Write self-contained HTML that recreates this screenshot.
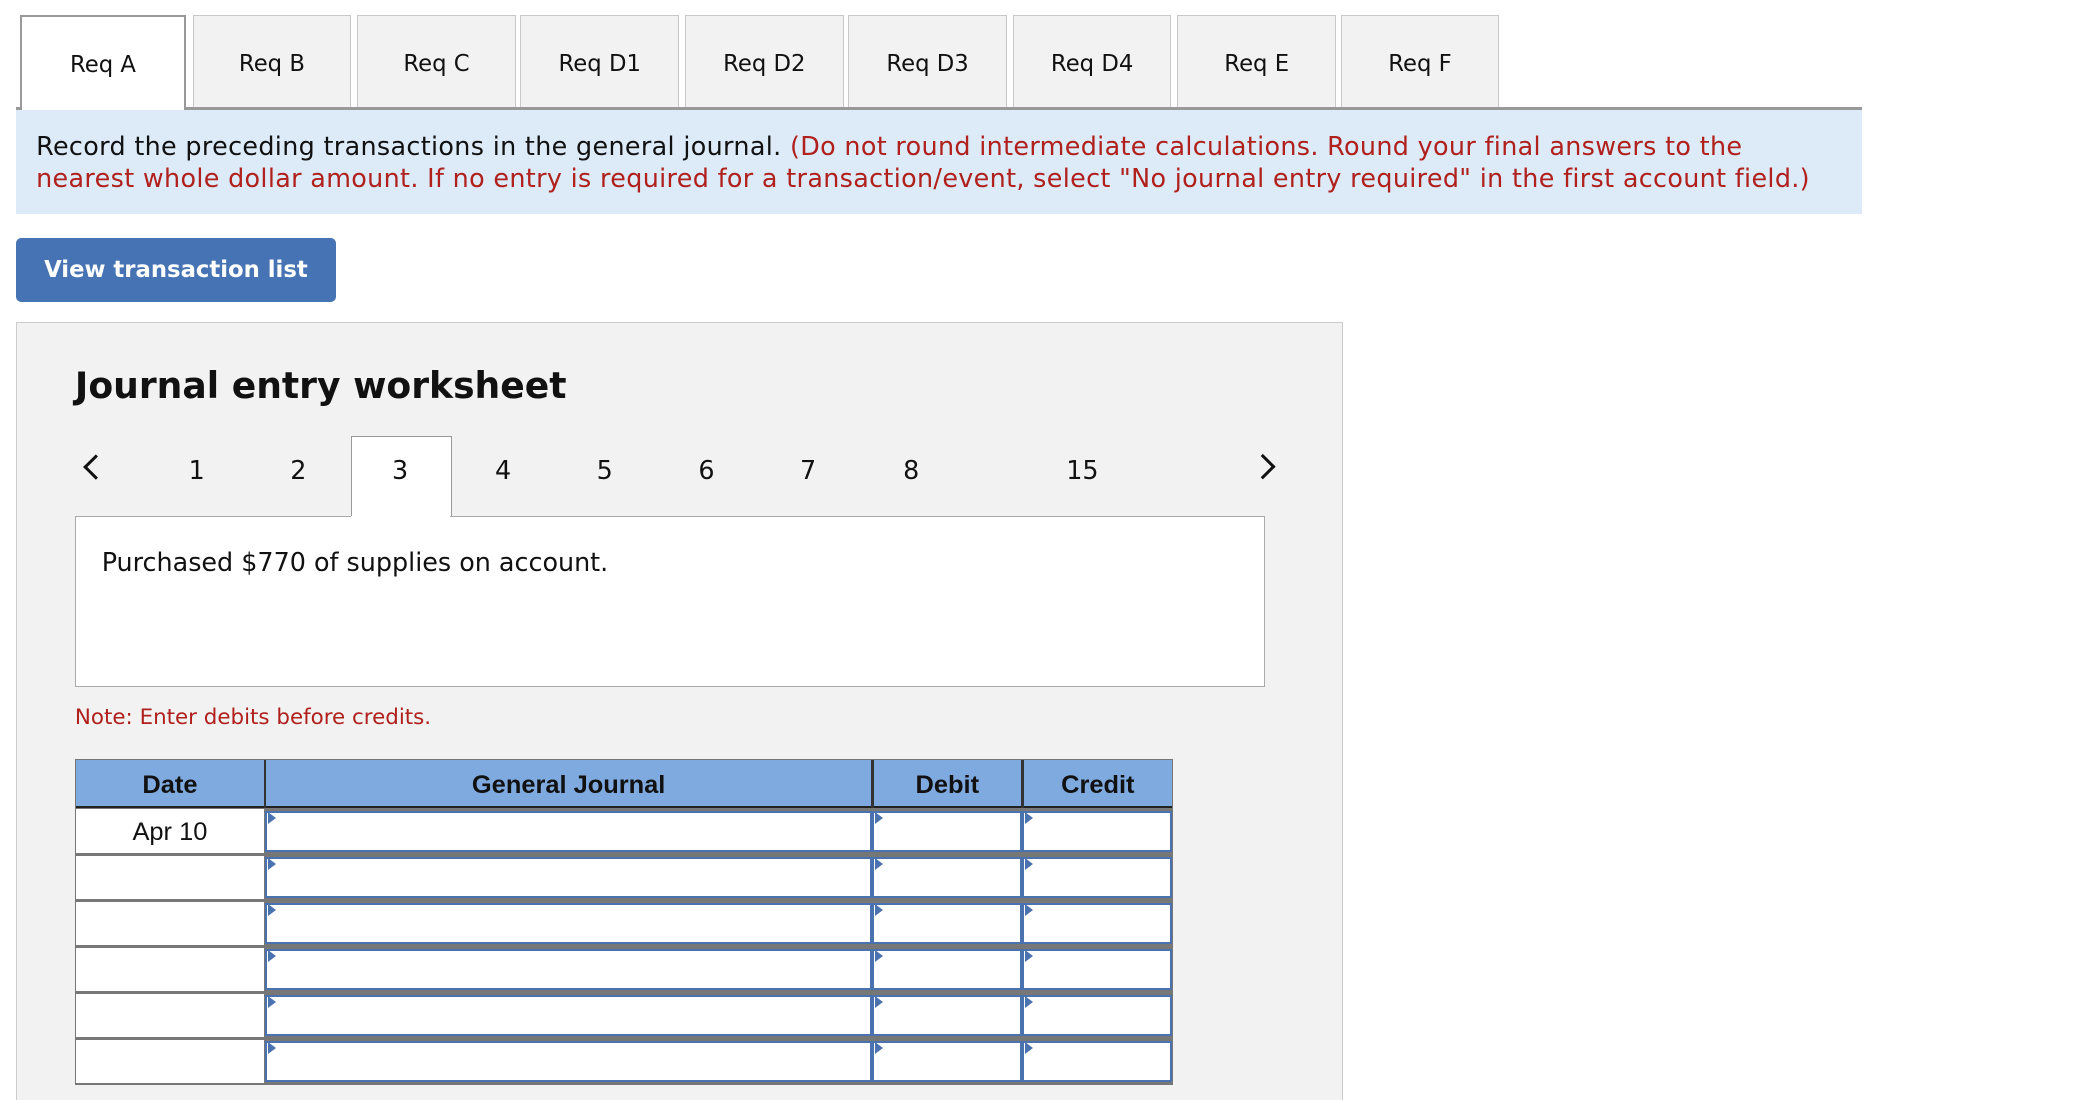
<!DOCTYPE html>
<html><head><meta charset="utf-8"><style>
html,body{margin:0;padding:0;background:#fff;overflow:hidden}
body{width:2098px;height:1100px}
#w{zoom:1.338;position:relative;width:1568px;height:822px;font-family:"DejaVu Sans","Liberation Sans",sans-serif;color:#111}
.a{position:absolute}
.tab{position:absolute;top:11px;height:69px;width:117px;background:#f2f2f2;border:1px solid #c8c8c8;border-bottom:none;font-size:17px;text-align:center;line-height:72px}
.tab.on{background:#fff;border:2px solid #999;border-bottom:none;z-index:2;height:70px}
.n{position:absolute;top:340px;font-size:19px;width:30px;text-align:center}
.cell{position:absolute;background:#fff;border:2px solid #4a72ae;box-sizing:border-box}
.tri{position:absolute;width:0;height:0;border-top:5px solid transparent;border-bottom:5px solid transparent;border-left:6px solid #4a72ae}
.arr{position:absolute;top:342px;width:11px;height:11px;border-left:2.5px solid #111;border-bottom:2.5px solid #111}
</style></head><body><div id="w">
<div class="tab on" style="left:15px;width:121px">Req A</div>
<div class="tab" style="left:144px">Req B</div>
<div class="tab" style="left:267px">Req C</div>
<div class="tab" style="left:389px">Req D1</div>
<div class="tab" style="left:512px">Req D2</div>
<div class="tab" style="left:634px">Req D3</div>
<div class="tab" style="left:757px">Req D4</div>
<div class="tab" style="left:880px">Req E</div>
<div class="tab" style="left:1002px">Req F</div>
<div class="a" style="left:12px;top:80px;width:1380px;height:2px;background:#999"></div>
<div class="a" style="left:12px;top:82px;width:1380px;height:78px;background:#ddebf8"></div>
<div class="a" style="left:27px;top:97px;width:1340px;font-size:19px;line-height:24px;letter-spacing:0.25px">Record the preceding transactions in the general journal. <span style="color:#b0201c">(Do not round intermediate calculations. Round your final answers to the nearest whole dollar amount. If no entry is required for a transaction/event, select "No journal entry required" in the first account field.)</span></div>
<div class="a" style="left:12px;top:178px;width:239px;height:48px;background:#4673b4;border-radius:4px;color:#fff;font-weight:bold;font-size:17px;line-height:48px;text-align:center">View transaction list</div>
<div class="a" style="left:12px;top:241px;width:990px;height:600px;background:#f2f2f2;border:1px solid #ccc"></div>
<div class="a" style="left:56px;top:272px;font-size:27px;font-weight:bold">Journal entry worksheet</div>
<div class="arr" style="left:65px;transform:rotate(45deg)"></div>
<div class="arr" style="left:937px;transform:rotate(-135deg)"></div>
<div class="a" style="left:262px;top:326px;width:74px;height:62px;background:#fff;border:1px solid #999;border-bottom:none"></div>
<div class="n" style="left:132px">1</div><div class="n" style="left:208px">2</div><div class="n" style="left:284px">3</div><div class="n" style="left:361px">4</div><div class="n" style="left:437px">5</div><div class="n" style="left:513px">6</div><div class="n" style="left:589px">7</div><div class="n" style="left:666px">8</div><div class="n" style="left:794px">15</div>
<div class="a" style="left:56px;top:386px;width:888px;height:126px;background:#fff;border:1px solid #aaa"></div>
<div class="a" style="left:262px;top:386px;width:74px;height:2px;background:#fff"></div>
<div class="a" style="left:76px;top:409px;font-size:19px">Purchased $770 of supplies on account.</div>
<div class="a" style="left:56px;top:527px;font-size:16px;color:#b0201c">Note: Enter debits before credits.</div>
<div class="a" style="left:56px;top:567px;width:821px;height:244px;background:#777"></div>
<div class="a" style="left:57px;top:568px;width:819px;height:36px;background:#7eaadf;border-bottom:2px solid #222;box-sizing:border-box"></div>
<div class="a" style="left:197px;top:568px;width:2px;height:36px;background:#333"></div>
<div class="a" style="left:651px;top:568px;width:2px;height:36px;background:#333"></div>
<div class="a" style="left:763px;top:568px;width:2px;height:36px;background:#333"></div>
<div class="a" style="font-family:'Liberation Sans',sans-serif;font-weight:bold;font-size:19px;top:576px;left:56px;width:142px;text-align:center">Date</div>
<div class="a" style="font-family:'Liberation Sans',sans-serif;font-weight:bold;font-size:19px;top:576px;left:198px;width:454px;text-align:center">General Journal</div>
<div class="a" style="font-family:'Liberation Sans',sans-serif;font-weight:bold;font-size:19px;top:576px;left:652px;width:112px;text-align:center">Debit</div>
<div class="a" style="font-family:'Liberation Sans',sans-serif;font-weight:bold;font-size:19px;top:576px;left:764px;width:113px;text-align:center">Credit</div>
<div id="rows"></div>
<script>
var h='';for(var i=0;i<6;i++){var t=605+i*34.4;
h+='<div class="a" style="left:57px;top:'+t+'px;width:140px;height:32.4px;background:#fff"></div>';
h+='<div class="cell" style="left:198px;top:'+(t+1)+'px;width:454px;height:31px"></div>';
h+='<div class="cell" style="left:652px;top:'+(t+1)+'px;width:112px;height:31px"></div>';
h+='<div class="cell" style="left:764px;top:'+(t+1)+'px;width:112px;height:31px"></div>';
h+='<div class="tri" style="left:200px;top:'+(t+2)+'px"></div><div class="tri" style="left:654px;top:'+(t+2)+'px"></div><div class="tri" style="left:766px;top:'+(t+2)+'px"></div>';}
h+='<div class="a" style="font-family:\'Liberation Sans\',sans-serif;font-size:19px;left:56px;width:142px;text-align:center;top:611px">Apr 10</div>';
document.getElementById('rows').innerHTML=h;
</script>
</div></body></html>
